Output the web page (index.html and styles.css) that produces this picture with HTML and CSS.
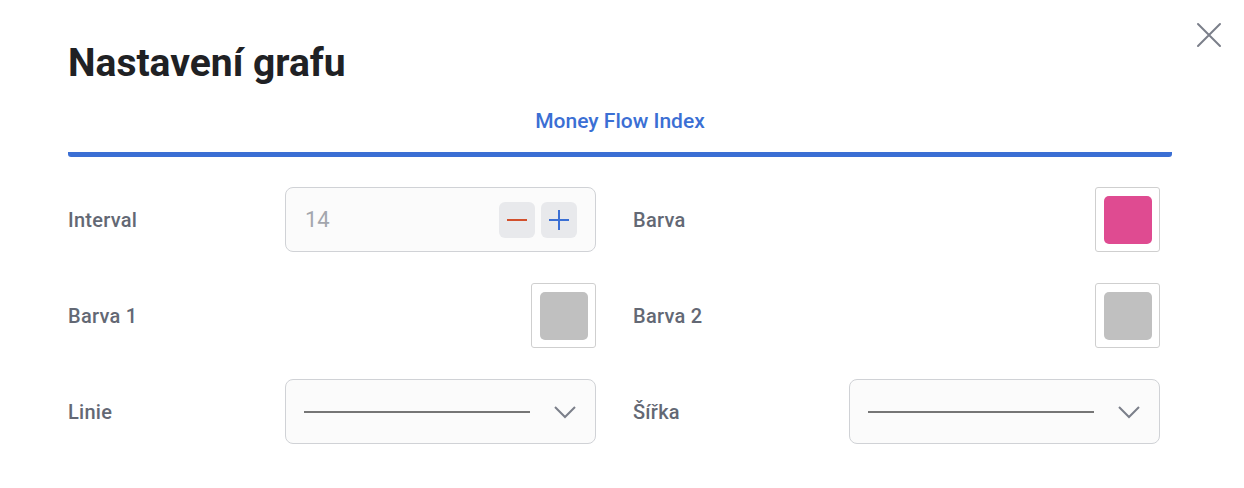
FILE: index.html
```html
<!DOCTYPE html>
<html lang="cs">
<head>
<meta charset="utf-8">
<link rel="stylesheet" href="styles.css">
</head>
<body>
<div class="dialog">
  <button class="close" aria-label="Zavřít">
    <svg width="26" height="26" viewBox="0 0 26 26"><path d="M2 2 L24 24 M24 2 L2 24" stroke="#7b7f8a" stroke-width="2" fill="none" stroke-linecap="round"/></svg>
  </button>
  <h1 class="title">Nastavení grafu</h1>
  <div class="tabs">
    <div class="tab active">Money Flow Index</div>
  </div>
  <div class="grid">
    <div class="field">
      <span class="label">Interval</span>
      <div class="number">
        <span class="value">14</span>
        <div class="steps">
          <button class="step"><svg width="22" height="22" viewBox="0 0 22 22"><path d="M1 11 H21" stroke="#d2502c" stroke-width="2"/></svg></button>
          <button class="step"><svg width="22" height="22" viewBox="0 0 22 22"><path d="M1 11 H21 M11 1 V21" stroke="#3b6fd4" stroke-width="2"/></svg></button>
        </div>
      </div>
    </div>
    <div class="field">
      <span class="label">Barva</span>
      <div class="swatch-box"><div class="swatch pink"></div></div>
    </div>
    <div class="field">
      <span class="label">Barva 1</span>
      <div class="swatch-box"><div class="swatch gray"></div></div>
    </div>
    <div class="field">
      <span class="label">Barva 2</span>
      <div class="swatch-box"><div class="swatch gray"></div></div>
    </div>
    <div class="field">
      <span class="label">Linie</span>
      <div class="select">
        <span class="line"></span>
        <svg class="chev" width="24" height="14" viewBox="0 0 24 14"><path d="M2 2 L12 12 L22 2" stroke="#7b7f8a" stroke-width="2" fill="none"/></svg>
      </div>
    </div>
    <div class="field">
      <span class="label">Šířka</span>
      <div class="select">
        <span class="line"></span>
        <svg class="chev" width="24" height="14" viewBox="0 0 24 14"><path d="M2 2 L12 12 L22 2" stroke="#7b7f8a" stroke-width="2" fill="none"/></svg>
      </div>
    </div>
  </div>
</div>
</body>
</html>
```

FILE: styles.css
```css
* { box-sizing: border-box; }
html, body { margin: 0; padding: 0; background: #ffffff; }
body { font-family: Roboto, "Liberation Sans", sans-serif; }

.dialog {
  position: relative;
  width: 1244px;
  height: 488px;
  padding: 39px 72px 0 68px;
}

.close {
  position: absolute;
  top: 22px;
  right: 22px;
  width: 26px;
  height: 26px;
  padding: 0;
  border: 0;
  background: none;
}

.title {
  margin: 0;
  font-size: 39px;
  font-weight: 700;
  color: #202124;
  line-height: 48px;
}

.tabs {
  margin-top: 21px;
  border-bottom: 5px solid #3b6fd4;
  border-radius: 3px;
  display: flex;
  justify-content: center;
}
.tab {
  font-size: 21px;
  font-weight: 500;
  color: #3b6fd4;
  line-height: 26px;
  padding-bottom: 18px;
}

.grid {
  margin-top: 30px;
  display: grid;
  grid-template-columns: 528px 527px;
  column-gap: 37px;
  row-gap: 31px;
}

.field {
  display: flex;
  align-items: center;
  justify-content: space-between;
  height: 65px;
}

.label {
  font-size: 20px;
  font-weight: 500;
  letter-spacing: 0.25px;
  color: #636874;
}

.number, .select {
  width: 311px;
  height: 65px;
  border: 1px solid #d0d2d6;
  border-radius: 8px;
  background: #fbfbfb;
  display: flex;
  align-items: center;
}
.number { padding: 0 18px 0 19px; justify-content: space-between; }
.value { font-size: 22px; color: #a3a6ad; }
.steps { display: flex; gap: 6px; }
.step {
  width: 36px;
  height: 36px;
  border: 0;
  border-radius: 6px;
  background: #e8e9ec;
  padding: 0;
  display: flex;
  align-items: center;
  justify-content: center;
}

.swatch-box {
  width: 65px;
  height: 65px;
  border: 1px solid #cfcfcf;
  border-radius: 3px;
  display: flex;
  align-items: center;
  justify-content: center;
}
.swatch { width: 48px; height: 48px; border-radius: 5px; }
.pink { background: #df4b91; }
.gray { background: #c0c0c0; }

.select { padding: 0 18px 0 18px; justify-content: space-between; }
.line { width: 226px; height: 2px; background: #767676; }
.chev { display: block; }
```
